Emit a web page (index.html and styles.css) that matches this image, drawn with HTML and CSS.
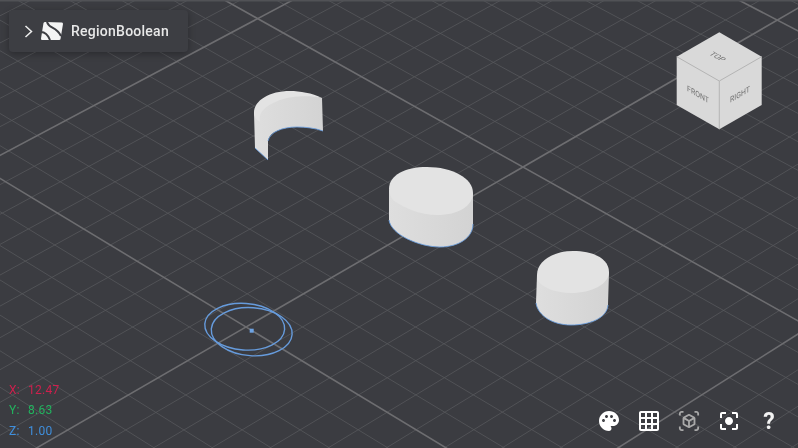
FILE: index.html
```html
<!DOCTYPE html>
<html lang="en">
<head>
  <meta charset="UTF-8">
  <title>RegionBoolean</title>
  <link rel="stylesheet" href="styles.css">
</head>
<body>
  <div class="viewport">
    <svg class="layer grid-layer" id="grid" width="798" height="448" viewBox="0 0 798 448"></svg>

    <svg class="layer scene-layer" width="798" height="448" viewBox="0 0 798 448">
      <defs>
        <linearGradient id="wallShade" x1="0" y1="0" x2="1" y2="0">
          <stop offset="0" stop-color="#dedede"/>
          <stop offset="0.55" stop-color="#d8d8d8"/>
          <stop offset="1" stop-color="#d3d3d3"/>
        </linearGradient>
      </defs>

      <!-- cut shell -->
      <path class="wall" d="M254,113 L255,148 L268,160 L268,140 C270,132 282,127 297,127 C305,127 315,128 323,131 L322,98 C300,91 270,91 254,113 Z"/>
      <path class="top-face" d="M322,98 C312,93 300,91 290,91 C270,91 254,100 254,113 C254,117 257,120 260,122 C258,112 265,106 280,100 C290,96 310,95 322,98 Z"/>
      <path class="edge" d="M255,148 L268,160 M268,141 C270,132 282,127 297,127 C305,127 315,128 323,131"/>

      <!-- big cylinder -->
      <path class="wall" d="M389,190 L389,220 C391,235 420,247 440,247 C458,247 473,238 473,224 L473,193 Z"/>
      <path class="top-face" d="M389,189 C389,175 405,167 427,167 C452,167 473,178 473,193 C473,206 458,215 437,215 C420,215 405,208 394,201 C391,198 389,194 389,189 Z"/>
      <path class="edge" d="M389,220 C391,235 420,247 440,247 C458,247 473,238 473,224"/>

      <!-- small cylinder -->
      <path class="wall" d="M537,275 L536,303 C538,316 553,325 571,325 C590,325 607,318 608,305 L609,272 Z"/>
      <path class="top-face" d="M537,275 C537,261 553,251 573,251 C594,251 609,259 609,272 C609,284 592,293 571,293 C556,293 543,288 538,281 C537,279 537,277 537,275 Z"/>
      <path class="edge" d="M536,303 C538,316 553,325 571,325 C590,325 607,318 608,305"/>

      <!-- sketch circles -->
      <ellipse class="sketch" cx="244.7" cy="326.7" rx="40" ry="23.3" transform="rotate(4 244.7 326.7)"/>
      <ellipse class="sketch" cx="251.7" cy="331.7" rx="40.5" ry="24" transform="rotate(4 251.7 331.7)"/>
      <rect class="sketch-dot" x="249.7" y="328.7" width="4" height="4"/>

      <!-- view cube -->
      <path class="cube" d="M719.3,32.3 L761.7,56.7 L761.7,105 L719.3,129.3 L676.7,105 L676.7,56.7 Z"/>
      <path class="cube-edge" d="M676.7,56.7 L719.3,81 L761.7,56.7 M719.3,81 L719.3,129.3"/>
      <text class="cube-label" transform="matrix(.866 .5 -.866 .5 717 57)">TOP</text>
      <text class="cube-label" transform="matrix(.866 .5 0 1 698 95)">FRONT</text>
      <text class="cube-label" transform="matrix(.866 -.5 0 1 740 95)">RIGHT</text>
    </svg>

    <div class="title-panel">
      <svg class="chevron" width="9" height="13" viewBox="0 0 9 13"><path d="M1.5,1 L7.5,6.5 L1.5,12"/></svg>
      <svg class="logo" width="22" height="18" viewBox="0 0 22 18">
        <path class="logo-body" d="M4,0 L21,0.5 Q22,0.5 22,2 L19.5,17 Q19.5,18 18,18 L1,18 Q0,18 0,16.5 L2.5,1 Q3,0 4,0 Z"/>
        <path class="logo-cut" d="M6,0 C8,7 15,4 20,14 M0,10 C4,10 7,13 9,18"/>
      </svg>
      <span class="title-text">RegionBoolean</span>
    </div>

    <div class="coords">
      <div class="coord coord-x"><span class="coord-label">X:</span><span>12.47</span></div>
      <div class="coord coord-y"><span class="coord-label">Y:</span><span>8.63</span></div>
      <div class="coord coord-z"><span class="coord-label">Z:</span><span>1.00</span></div>
    </div>

    <div class="toolbar">
      <button class="tool-btn">
        <svg width="24" height="24" viewBox="0 0 24 24"><path d="M12 2C6.49 2 2 6.49 2 12s4.49 10 10 10c1.38 0 2.5-1.12 2.5-2.5 0-.61-.23-1.2-.64-1.67-.08-.1-.13-.21-.13-.33 0-.28.22-.5.5-.5H16c3.31 0 6-2.69 6-6 0-4.96-4.49-9-10-9zm5.5 11c-.83 0-1.5-.67-1.5-1.5s.67-1.5 1.5-1.5 1.5.67 1.5 1.5-.67 1.5-1.5 1.5zm-3-4c-.83 0-1.5-.67-1.5-1.5S13.67 6 14.5 6s1.5.67 1.5 1.5S15.33 9 14.5 9zM5 11.5c0-.83.67-1.5 1.5-1.5s1.5.67 1.5 1.5S7.33 13 6.5 13 5 12.33 5 11.5zm6-4c0 .83-.67 1.5-1.5 1.5S8 8.33 8 7.5 8.67 6 9.5 6s1.5.67 1.5 1.5z"/></svg>
      </button>
      <button class="tool-btn">
        <svg width="24" height="24" viewBox="0 0 24 24"><path d="M20 2H4c-1.1 0-2 .9-2 2v16c0 1.1.9 2 2 2h16c1.1 0 2-.9 2-2V4c0-1.1-.9-2-2-2zM8 20H4v-4h4v4zm0-6H4v-4h4v4zm0-6H4V4h4v4zm6 12h-4v-4h4v4zm0-6h-4v-4h4v4zm0-6h-4V4h4v4zm6 12h-4v-4h4v4zm0-6h-4v-4h4v4zm0-6h-4V4h4v4z"/></svg>
      </button>
      <button class="tool-btn tool-btn-dim">
        <svg width="22" height="22" viewBox="0 0 24 24"><path d="M3 4c0-.55.45-1 1-1h2V1H4C2.34 1 1 2.34 1 4v2h2V4zm0 16v-2H1v2c0 1.66 1.34 3 3 3h2v-2H4c-.55 0-1-.45-1-1zM20 1h-2v2h2c.55 0 1 .45 1 1v2h2V4c0-1.66-1.34-3-3-3zm1 19c0 .55-.45 1-1 1h-2v2h2c1.66 0 3-1.34 3-3v-2h-2v2zm-2-5.13V9.13c0-.72-.38-1.38-1-1.73l-5-2.88c-.31-.18-.65-.27-1-.27s-.69.09-1 .27L6 7.39c-.62.36-1 1.02-1 1.74v5.74c0 .72.38 1.38 1 1.73l5 2.88c.31.18.65.27 1 .27s.69-.09 1-.27l5-2.88c.62-.35 1-1.01 1-1.73zm-8 2.3l-4-2.3v-4.63l4 2.33v4.6zm1-6.33L8.04 8.53 12 6.25l3.96 2.28L12 10.84zm5 4.03l-4 2.3v-4.6l4-2.33v4.63z"/></svg>
      </button>
      <button class="tool-btn">
        <svg width="24" height="24" viewBox="0 0 24 24"><path d="M12 8c-2.21 0-4 1.79-4 4s1.79 4 4 4 4-1.79 4-4-1.79-4-4-4zm-7 7H3v4c0 1.1.9 2 2 2h4v-2H5v-4zM5 5h4V3H5c-1.1 0-2 .9-2 2v4h2V5zm14-2h-4v2h4v4h2V5c0-1.1-.9-2-2-2zm0 16h-4v2h4c1.1 0 2-.9 2-2v-4h-2v4z"/></svg>
      </button>
      <button class="tool-btn tool-btn-text">?</button>
    </div>
  </div>

  <script src="grid.js"></script>
</body>
</html>
```

FILE: styles.css
```css
body {
  margin: 0;
  background-color: #3b3c41;
  font-family: Roboto, "Liberation Sans", sans-serif;
}

.viewport {
  position: relative;
  width: 798px;
  height: 448px;
  overflow: hidden;
  background-color: #3b3c41;
}

.layer {
  position: absolute;
  left: 0;
  top: 0;
}

.grid-layer {
  filter: blur(0.3px);
}

.scene-layer {
  will-change: transform;
}

.grid-minor {
  stroke: #57585c;
  stroke-width: 0.8;
}

.grid-major {
  stroke: #6d6d70;
  stroke-width: 1.6;
}

.grid-far {
  fill: #515256;
}

.wall {
  fill: url(#wallShade);
}

.top-face {
  fill: #e3e3e3;
}

.edge {
  fill: none;
  stroke: #6a9fe0;
  stroke-width: 1;
  opacity: 0.85;
}

.sketch {
  fill: none;
  stroke: #669bdc;
  stroke-width: 1.4;
}

.sketch-dot {
  fill: #6ea3e3;
}

.cube {
  fill: #d9d9d9;
}

.cube-edge {
  fill: none;
  stroke: #b4b4b4;
  stroke-width: 1;
}

.cube-label {
  font-size: 8px;
  fill: #707070;
  text-anchor: middle;
  dominant-baseline: middle;
}

.title-panel {
  position: absolute;
  left: 9px;
  top: 10px;
  width: 179px;
  height: 42px;
  box-sizing: border-box;
  padding-left: 15px;
  display: flex;
  align-items: center;
  background-color: #3d3e43;
  border-radius: 4px;
  box-shadow: 0 2px 7px rgba(0, 0, 0, 0.3);
}

.chevron {
  margin-right: 8px;
}

.chevron path {
  fill: none;
  stroke: #eee;
  stroke-width: 1.5;
}

.logo {
  margin-right: 8px;
}

.logo-body {
  fill: #f4f4f4;
}

.logo-cut {
  fill: none;
  stroke: #3d3e43;
  stroke-width: 2;
}

.title-text {
  color: #e8e8e8;
  font-size: 14px;
  font-weight: 500;
  letter-spacing: 0.25px;
}

.coords {
  position: absolute;
  left: 9px;
  bottom: 10px;
  display: flex;
  flex-direction: column;
  gap: 6px;
  font-size: 12px;
  line-height: 14.5px;
  letter-spacing: 0.3px;
}

.coord {
  display: flex;
}

.coord-label {
  width: 19px;
}

.coord-x {
  color: #cf1f4d;
}

.coord-y {
  color: #22b45f;
}

.coord-z {
  color: #3f8fdd;
}

.toolbar {
  position: absolute;
  right: 9px;
  bottom: 7px;
  display: flex;
}

.tool-btn {
  width: 40px;
  height: 40px;
  padding: 0;
  border: none;
  background: none;
  display: flex;
  align-items: center;
  justify-content: center;
  fill: #fff;
  color: #f2f2f2;
}

.tool-btn-dim {
  fill: #a9a9a9;
}

.tool-btn-text {
  font-family: Roboto, "Liberation Sans", sans-serif;
  font-size: 23px;
  font-weight: 700;
}
```

FILE: grid.js
```js
// ground plane grid, one major cell is 10 minor cells
const cell = { p00: [246, 327], p10: [523, 167], p11: [809, 327], p01: [534, 501] };

function makeProjection({ p00, p10, p11, p01 }) {
  const dx1 = p10[0] - p11[0], dx2 = p01[0] - p11[0], sx = p00[0] - p10[0] + p11[0] - p01[0];
  const dy1 = p10[1] - p11[1], dy2 = p01[1] - p11[1], sy = p00[1] - p10[1] + p11[1] - p01[1];
  const den = dx1 * dy2 - dx2 * dy1;
  const g = (sx * dy2 - dx2 * sy) / den;
  const h = (dx1 * sy - sx * dy1) / den;
  const a = p10[0] - p00[0] + g * p10[0];
  const b = p01[0] - p00[0] + h * p01[0];
  const d = p10[1] - p00[1] + g * p10[1];
  const e = p01[1] - p00[1] + h * p01[1];
  return (u, v) => {
    const w = g * u + h * v + 1;
    return [(a * u + b * v + p00[0]) / w, (d * u + e * v + p00[1]) / w];
  };
}

const project = makeProjection(cell);
const svg = document.getElementById('grid');
const NS = 'http://www.w3.org/2000/svg';

function addLine(from, to, major) {
  const line = document.createElementNS(NS, 'line');
  line.setAttribute('x1', from[0].toFixed(1));
  line.setAttribute('y1', from[1].toFixed(1));
  line.setAttribute('x2', to[0].toFixed(1));
  line.setAttribute('y2', to[1].toFixed(1));
  line.setAttribute('class', major ? 'grid-major' : 'grid-minor');
  svg.appendChild(line);
}

const lo = -2, hi = 3;
for (let pass = 0; pass < 2; pass++) {
  for (let i = lo * 10; i <= hi * 10; i++) {
    const major = i % 10 === 0;
    if (major !== (pass === 1)) continue;
    addLine(project(i / 10, lo), project(i / 10, hi), major);
    addLine(project(lo, i / 10), project(hi, i / 10), major);
  }
}

const far = document.createElementNS(NS, 'rect');
far.setAttribute('width', '798');
far.setAttribute('height', '1.5');
far.setAttribute('class', 'grid-far');
svg.appendChild(far);
```
